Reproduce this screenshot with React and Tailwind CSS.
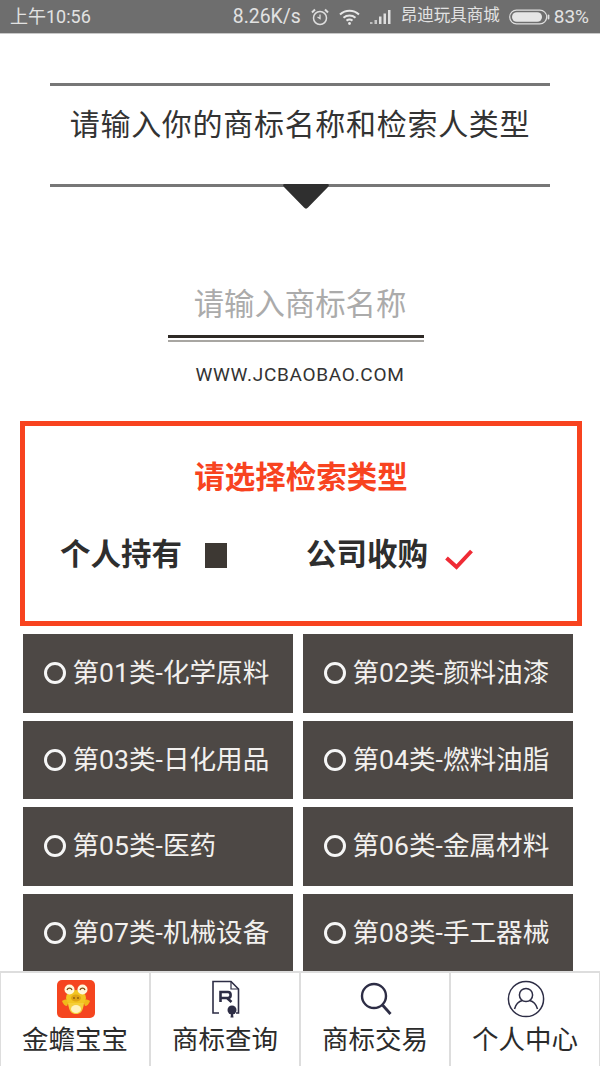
const font = { fontFamily: 'Roboto, "Noto Sans CJK SC", sans-serif' };

const categories = [
  "第01类-化学原料",
  "第02类-颜料油漆",
  "第03类-日化用品",
  "第04类-燃料油脂",
  "第05类-医药",
  "第06类-金属材料",
  "第07类-机械设备",
  "第08类-手工器械",
];

const AlarmIcon = () => (
  <svg width="18" height="18" viewBox="0 0 18 18" fill="none" stroke="#dedede" strokeWidth="1.5">
    <circle cx="9" cy="10" r="6.5" />
    <path d="M9 6.5V10.5L6.5 9" strokeWidth="1.3" />
    <path d="M1 4.5L4 1.5M17 4.5L14 1.5" strokeWidth="2" />
  </svg>
);

const WifiIcon = () => (
  <svg width="21" height="16" viewBox="0 0 21 16" fill="none" stroke="#e8e8e8" strokeWidth="2">
    <path d="M1 5.5C6.5 0.5 14.5 0.5 20 5.5" />
    <path d="M4.5 8.8C8 5.8 13 5.8 16.5 8.8" />
    <path d="M7.5 11.6C9.2 10.4 11.8 10.4 13.5 11.6" />
    <circle cx="10.5" cy="14.5" r="1.4" fill="#e8e8e8" stroke="none" />
  </svg>
);

const SignalIcon = () => (
  <svg width="21" height="14" viewBox="0 0 21 14" fill="#dedede">
    <rect x="0" y="12" width="2.5" height="2" opacity="0.7" />
    <rect x="4.5" y="10" width="2.5" height="4" opacity="0.8" />
    <rect x="9" y="6.5" width="2.5" height="7.5" />
    <rect x="13.5" y="3.5" width="2.5" height="10.5" />
    <rect x="18" y="0" width="2.5" height="14" />
  </svg>
);

const BatteryIcon = () => (
  <svg width="41" height="16" viewBox="0 0 41 16" fill="none">
    <rect x="0.7" y="1.2" width="37" height="13.6" rx="6.8" stroke="#dedede" strokeWidth="1.2" />
    <rect x="3" y="3.2" width="30" height="9.6" rx="4.8" fill="#e6e6e6" />
    <rect x="38.6" y="5.5" width="1.8" height="5" rx="0.9" fill="#dedede" />
  </svg>
);

const StatusBar = () => (
  <div className="flex h-[34px] shrink-0 items-center border-b border-[#c8c8c8] bg-[#6e6e6e] pl-[10px] pr-[11px] text-[18px] leading-none text-[#e2e2e2]">
    <span>上午10:56</span>
    <span className="ml-auto text-[19.4px]">8.26K/s</span>
    <span className="ml-[10px]"><AlarmIcon /></span>
    <span className="ml-[10px]"><WifiIcon /></span>
    <span className="ml-[10px]"><SignalIcon /></span>
    <span className="ml-[10px] text-[16.5px]">昂迪玩具商城</span>
    <span className="ml-[9px]"><BatteryIcon /></span>
    <span className="ml-[4px] text-[19px]">83%</span>
  </div>
);

const Heading = () => (
  <div className="relative mx-[50px] mt-[49px] flex h-[104px] items-center justify-center border-y-[3px] border-[#777777]">
    <span className="pb-[20px] text-[30px] leading-none tracking-[0.7px] text-[#333333]">
      请输入你的商标名称和检索人类型
    </span>
    <svg
      className="absolute left-[233px] top-[98px]"
      width="46"
      height="25"
      viewBox="0 0 46 25"
      fill="#2f2f2f"
    >
      <path d="M2 0H44C46 0 46.5 1.5 45 3L25 23.5C23.8 25 22.2 25 21 23.5L1 3C-0.5 1.5 0 0 2 0Z" />
    </svg>
  </div>
);

const NameInput = () => (
  <div className="mt-[92px] flex flex-col items-center">
    <input
      className="h-[50px] w-[260px] bg-transparent text-center text-[30.4px] leading-none text-[#333333] outline-none placeholder:text-[#ababab]"
      placeholder="请输入商标名称"
      style={font}
    />
    <div className="mr-[8px] mt-[6px] h-[3px] w-[256px] bg-[#2f2a26]" />
    <div className="mr-[8px] mt-[2px] h-[2px] w-[256px] bg-[#a8a6a2]" />
    <div className="mt-[22.5px] text-[19px] leading-none tracking-[0.7px] text-[#333333]">
      WWW.JCBAOBAO.COM
    </div>
  </div>
);

const TypeBox = () => (
  <div className="mx-[20px] mt-[37.5px] h-[205px] w-[562px] border-[5px] border-[#f8431f] pt-[34px]">
    <div className="text-center text-[30.5px] font-bold leading-[36px] text-[#f8431f]">
      请选择检索类型
    </div>
    <div className="mt-[39px] flex h-[40px] items-center pl-[35px] text-[30.5px] font-bold leading-none text-[#2e2e2e]">
      <span>个人持有</span>
      <span className="ml-[23px] h-[25px] w-[22px] bg-[#3d3833]" />
      <span className="ml-[79px]">公司收购</span>
      <svg className="ml-[17px] mt-[8px]" width="28" height="21" viewBox="0 0 28 21" fill="none" stroke="#ef2b35" strokeWidth="4">
        <path d="M1.5 9L11.5 18L26.5 2" />
      </svg>
    </div>
  </div>
);

const CategoryGrid = () => (
  <div className="ml-[23px] mt-[8px] grid w-[550px] grid-cols-2 gap-x-[10px] gap-y-[8px]">
    {categories.map((name) => (
      <div
        key={name}
        className="flex h-[78.6px] items-center bg-[#4d4845] pl-[20.5px] text-[26.6px] leading-none text-[#f2f0ee]"
      >
        <span className="h-[22px] w-[22px] shrink-0 rounded-full border-[3.5px] border-[#f6f6f6]" />
        <span className="ml-[7px] whitespace-nowrap">{name}</span>
      </div>
    ))}
  </div>
);

const LogoIcon = () => (
  <svg width="38" height="38" viewBox="0 0 38 38">
    <rect width="38" height="38" rx="5" fill="#f5451f" />
    <path d="M5 21C8 19 10 19 12 21L10 26C8 26 6 24 5 21Z" fill="#f0b91a" />
    <path d="M33 21C30 19 28 19 26 21L28 26C30 26 32 24 33 21Z" fill="#f0b91a" />
    <ellipse cx="19" cy="18" rx="10" ry="8" fill="#f2c522" />
    <path d="M11 23C12 32 15 34 19 34C23 34 26 32 27 23Z" fill="#f5cf3a" />
    <ellipse cx="19" cy="29" rx="5" ry="4" fill="#fff3c0" />
    <circle cx="12.5" cy="9.5" r="5" fill="#fff8dc" />
    <circle cx="25.5" cy="9.5" r="5" fill="#fff8dc" />
    <path d="M10 10C11 7.5 14 7.5 15 10M23 10C24 7.5 27 7.5 28 10" fill="none" stroke="#7a4a10" strokeWidth="1.3" />
    <ellipse cx="19" cy="18" rx="5" ry="3.5" fill="#dfa514" />
    <circle cx="17" cy="18" r="0.9" fill="#8a5a10" />
    <circle cx="21" cy="18" r="0.9" fill="#8a5a10" />
  </svg>
);

const RegisterIcon = () => (
  <svg width="30" height="38" viewBox="0 0 30 38" fill="none" stroke="#2d2d45">
    <path d="M8 33H2V1.5H20L27.5 9V33H25" strokeWidth="1.6" />
    <path d="M20 1.5V9H27.5" strokeWidth="1.2" />
    <path d="M9.5 22V12H17C20.5 12 20.5 18 17 18H9.5M16 18L20.5 22" strokeWidth="2.6" />
    <circle cx="21" cy="30" r="4.5" fill="#2d2d45" stroke="none" />
    <path d="M20 34L19.5 37.5H22.5L22 34" fill="#2d2d45" stroke="none" />
  </svg>
);

const SearchIcon = () => (
  <svg width="32" height="34" viewBox="0 0 32 34" fill="none" stroke="#2d2d45">
    <circle cx="14" cy="14" r="12" strokeWidth="2.4" />
    <path d="M22.5 23L30.5 32" strokeWidth="2.8" />
  </svg>
);

const PersonIcon = () => (
  <svg width="38" height="38" viewBox="0 0 38 38" fill="none" stroke="#2d2d45" strokeWidth="1.5">
    <circle cx="19" cy="19" r="17.6" />
    <circle cx="19" cy="15" r="6.6" />
    <path d="M7.5 29C9 23.5 13 21 15.5 20.5M30.5 29C29 23.5 25 21 22.5 20.5" />
  </svg>
);

const tabs = [
  { label: "金蟾宝宝", icon: <LogoIcon /> },
  { label: "商标查询", icon: <RegisterIcon /> },
  { label: "商标交易", icon: <SearchIcon /> },
  { label: "个人中心", icon: <PersonIcon /> },
];

const TabBar = () => (
  <div className="grid h-[95px] shrink-0 grid-cols-4 border-t-[2px] border-[#dddddd] bg-white">
    {tabs.map((tab) => (
      <div
        key={tab.label}
        className="flex flex-col items-center border-x border-[#dddddd] pt-[6px]"
      >
        <div className="ml-[2px] flex h-[39px] items-center">{tab.icon}</div>
        <div className="mt-[9px] text-[26.5px] leading-none text-[#2b2b2b]">
          {tab.label}
        </div>
      </div>
    ))}
  </div>
);

export default function App() {
  return (
    <div className="flex h-[1066px] w-[600px] flex-col overflow-hidden bg-white" style={font}>
      <StatusBar />
      <div className="min-h-0 flex-1 overflow-hidden">
        <Heading />
        <NameInput />
        <TypeBox />
        <CategoryGrid />
      </div>
      <TabBar />
    </div>
  );
}
